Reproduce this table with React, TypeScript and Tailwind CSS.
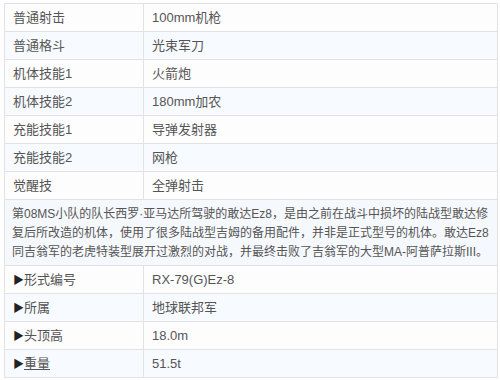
const rows1: [string, string][] = [
  ["普通射击", "100mm机枪"],
  ["普通格斗", "光束军刀"],
  ["机体技能1", "火箭炮"],
  ["机体技能2", "180mm加农"],
  ["充能技能1", "导弹发射器"],
  ["充能技能2", "网枪"],
  ["觉醒技", "全弹射击"],
];

const rows2: [string, string][] = [
  ["形式编号", "RX-79(G)Ez-8"],
  ["所属", "地球联邦军"],
  ["头顶高", "18.0m"],
  ["重量", "51.5t"],
];

const lines = [
  "第08MS小队的队长西罗·亚马达所驾驶的敢达Ez8，是由之前在战斗中损坏的陆战型敢达修",
  "复后所改造的机体，使用了很多陆战型吉姆的备用配件，并非是正式型号的机体。敢达Ez8",
  "同吉翁军的老虎特装型展开过激烈的对战，并最终击败了吉翁军的大型MA-阿普萨拉斯III。",
];

export default function App() {
  return (
    <div className="w-[500px] h-[380px] bg-white pt-[3px] pl-[4px] overflow-hidden text-[13px] text-[#555] font-['Liberation_Sans','Noto_Sans_CJK_SC',sans-serif]">
      <table className="w-[494px] border-collapse border border-[#e2e2e2]">
        <tbody>
          {rows1.map(([k, v], i) => (
            <tr key={k} className={i % 2 ? "bg-[#f7fafe]" : "bg-[#fdfdfd]"}>
              <td className="h-[28px] w-[139px] border border-[#e2e2e2] pl-[8px] leading-none">{k}</td>
              <td className="h-[28px] border border-[#e2e2e2] pl-[8px] leading-none">{v}</td>
            </tr>
          ))}
          <tr className="bg-[#f5f8fc]">
            <td colSpan={2} className="h-[66px] border border-[#e2e2e2] pl-[7px] pt-[1px] text-[12px] leading-[19px]">
              {lines.map((l) => (
                <div key={l} className="whitespace-nowrap">{l}</div>
              ))}
            </td>
          </tr>
          {rows2.map(([k, v], i) => (
            <tr key={k} className={i % 2 ? "bg-[#f7fafe]" : "bg-[#fdfdfd]"}>
              <td className="h-[28px] w-[139px] border border-[#e2e2e2] pl-[8px] leading-none">
                <span className="text-[#222] text-[11px]">▶</span>
                <span className={k === "重量" ? "underline" : ""}>{k}</span>
              </td>
              <td className="h-[28px] border border-[#e2e2e2] pl-[8px] leading-none">{v}</td>
            </tr>
          ))}
        </tbody>
      </table>
    </div>
  );
}
